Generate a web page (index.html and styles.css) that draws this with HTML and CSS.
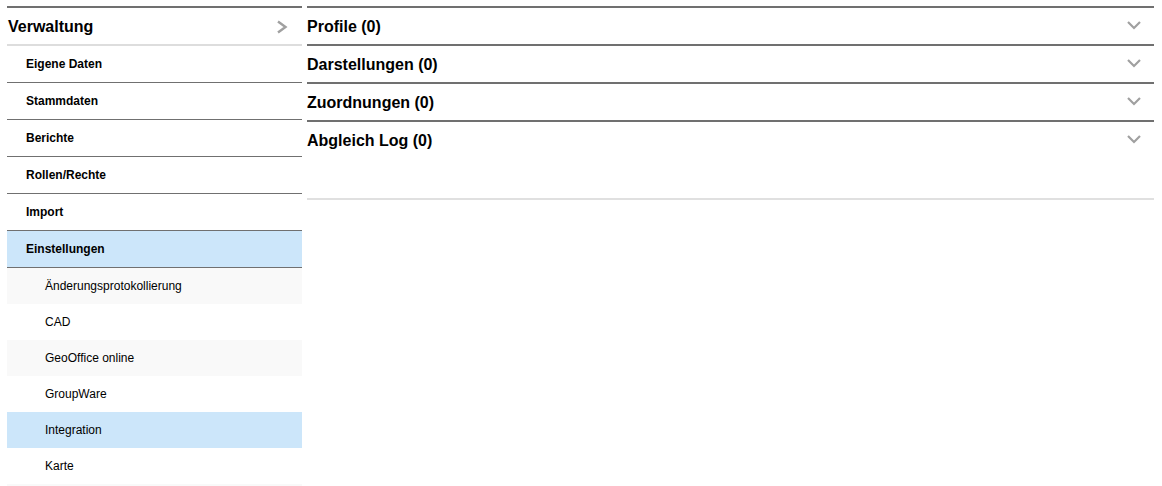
FILE: index.html
```html
<!DOCTYPE html>
<html lang="de">
<head>
  <meta charset="UTF-8">
  <title>Verwaltung</title>
  <link rel="stylesheet" href="styles.css">
</head>
<body>
  <div class="page">
    <div class="nav">
      <div class="nav-head">
        <span>Verwaltung</span>
        <svg class="chev-right" width="12" height="14" viewBox="0 0 12 14"><path d="M2 1.5 L9.5 7 L2 12.5" fill="none" stroke="#a0a0a0" stroke-width="2.4"/></svg>
      </div>
      <div class="nav-item">Eigene Daten</div>
      <div class="nav-item">Stammdaten</div>
      <div class="nav-item">Berichte</div>
      <div class="nav-item">Rollen/Rechte</div>
      <div class="nav-item">Import</div>
      <div class="nav-item active">Einstellungen</div>
      <div class="sub-item alt">Änderungsprotokollierung</div>
      <div class="sub-item">CAD</div>
      <div class="sub-item alt">GeoOffice online</div>
      <div class="sub-item">GroupWare</div>
      <div class="sub-item active">Integration</div>
      <div class="sub-item">Karte</div>
      <div class="sub-item alt filler"></div>
    </div>

    <div class="content">
      <div class="acc">
        <span>Profile (0)</span>
        <svg class="chev-down" width="14" height="10" viewBox="0 0 14 10"><path d="M1 2 L7 8 L13 2" fill="none" stroke="#a0a0a0" stroke-width="2.2"/></svg>
      </div>
      <div class="acc">
        <span>Darstellungen (0)</span>
        <svg class="chev-down" width="14" height="10" viewBox="0 0 14 10"><path d="M1 2 L7 8 L13 2" fill="none" stroke="#a0a0a0" stroke-width="2.2"/></svg>
      </div>
      <div class="acc">
        <span>Zuordnungen (0)</span>
        <svg class="chev-down" width="14" height="10" viewBox="0 0 14 10"><path d="M1 2 L7 8 L13 2" fill="none" stroke="#a0a0a0" stroke-width="2.2"/></svg>
      </div>
      <div class="acc">
        <span>Abgleich Log (0)</span>
        <svg class="chev-down" width="14" height="10" viewBox="0 0 14 10"><path d="M1 2 L7 8 L13 2" fill="none" stroke="#a0a0a0" stroke-width="2.2"/></svg>
      </div>
      <div class="acc-body"></div>
    </div>
  </div>
</body>
</html>
```

FILE: styles.css
```css
body {
  margin: 0;
  font-family: "Liberation Sans", Arial, sans-serif;
  color: #000;
  background: #fff;
}

.page {
  display: flex;
  gap: 5px;
  padding: 6px 8px 0 7px;
}

.nav {
  width: 295px;
  flex: none;
  border-top: 2px solid #707070;
}

.nav-head {
  height: 36px;
  display: flex;
  align-items: center;
  justify-content: space-between;
  padding: 0 14px 0 1px;
  font-size: 16px;
  font-weight: bold;
  border-bottom: 2px solid #dddddd;
}

.nav-head span {
  margin-top: 2px;
}

.chev-right {
  margin-top: 1px;
}

.nav-item {
  height: 36px;
  display: flex;
  align-items: center;
  padding-left: 19px;
  font-size: 12px;
  font-weight: bold;
  border-bottom: 1px solid #707070;
}

.nav-item.active {
  background: #cce6fa;
}

.sub-item {
  height: 36px;
  display: flex;
  align-items: center;
  padding-left: 38px;
  font-size: 12px;
}

.sub-item.alt {
  background: #f9f9f9;
}

.sub-item.active {
  background: #cce6fa;
}

.sub-item.filler {
  height: 2px;
}

.content {
  flex: 1;
}

.acc {
  height: 36px;
  display: flex;
  align-items: center;
  justify-content: space-between;
  padding: 0 13px 0 0;
  border-top: 2px solid #707070;
  font-size: 16px;
  font-weight: bold;
}

.acc span {
  margin-top: 2px;
}

.chev-down {
  margin-bottom: 2px;
}

.acc-body {
  height: 40px;
  border-bottom: 2px solid #e0e0e0;
}
```
